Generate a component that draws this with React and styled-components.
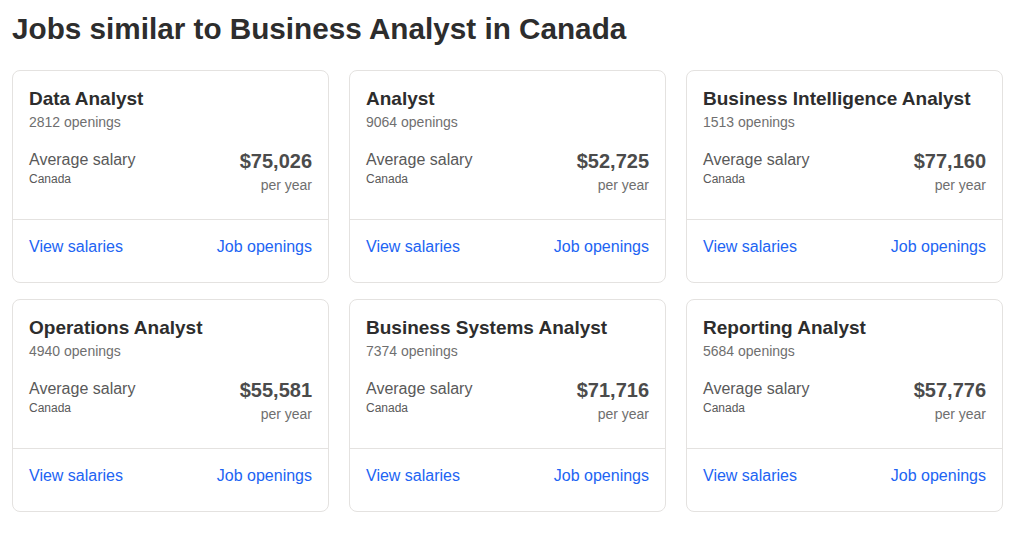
import React from "react"
import styled, { createGlobalStyle } from "styled-components"

const GlobalStyle = createGlobalStyle`
  body {
    margin: 0;
    background: #fff;
    font-family: "Liberation Sans", Arial, Helvetica, sans-serif;
  }
`

const StyledPage = styled.div`
  padding: 12px 20px 24px 12px;
`

const StyledHeading = styled.h1`
  margin: 0 0 24px;
  font-size: 29.7px;
  line-height: 34px;
  font-weight: 700;
  color: #2d2d2d;
`

const StyledGrid = styled.div`
  display: grid;
  grid-template-columns: repeat(3, 317px);
  column-gap: 20px;
  row-gap: 16px;
`

const StyledCard = styled.div`
  border: 1px solid #e4e2e0;
  border-radius: 8px;
  background: #fff;
  display: flex;
  flex-direction: column;
`

const StyledBody = styled.div`
  padding: 16px 16px 24px;
`

const StyledTitle = styled.div`
  font-size: 19px;
  line-height: 24px;
  font-weight: 700;
  color: #2d2d2d;
`

const StyledOpenings = styled.div`
  font-size: 14px;
  line-height: 20px;
  margin-top: 1px;
  color: #6f6f6f;
`

const StyledSalaryRow = styled.div`
  display: flex;
  justify-content: space-between;
  margin-top: 16px;
`

const StyledLabel = styled.div`
  font-size: 16px;
  line-height: 23px;
  color: #595959;
`

const StyledLocation = styled.div`
  font-size: 12px;
  line-height: 16px;
  color: #595959;
`

const StyledAmount = styled.div`
  text-align: right;
  font-size: 20px;
  line-height: 26px;
  font-weight: 700;
  color: #4b4b4b;
`

const StyledPeriod = styled.div`
  text-align: right;
  font-size: 14px;
  line-height: 20px;
  margin-top: 1px;
  color: #6f6f6f;
`

const StyledFooter = styled.div`
  border-top: 1px solid #e4e2e0;
  padding: 15px 16px 23px;
  display: flex;
  justify-content: space-between;
`

const StyledLink = styled.a`
  font-size: 16px;
  line-height: 24px;
  color: #2164f3;
  text-decoration: none;
  cursor: pointer;
  &:hover {
    text-decoration: underline;
  }
`

const jobs = [
  { title: "Data Analyst", openings: 2812, salary: "$75,026" },
  { title: "Analyst", openings: 9064, salary: "$52,725" },
  { title: "Business Intelligence Analyst", openings: 1513, salary: "$77,160" },
  { title: "Operations Analyst", openings: 4940, salary: "$55,581" },
  { title: "Business Systems Analyst", openings: 7374, salary: "$71,716" },
  { title: "Reporting Analyst", openings: 5684, salary: "$57,776" },
]

function JobCard({ title, openings, salary }) {
  return (
    <StyledCard>
      <StyledBody>
        <StyledTitle>{title}</StyledTitle>
        <StyledOpenings>{openings} openings</StyledOpenings>
        <StyledSalaryRow>
          <div>
            <StyledLabel>Average salary</StyledLabel>
            <StyledLocation>Canada</StyledLocation>
          </div>
          <div>
            <StyledAmount>{salary}</StyledAmount>
            <StyledPeriod>per year</StyledPeriod>
          </div>
        </StyledSalaryRow>
      </StyledBody>
      <StyledFooter>
        <StyledLink>View salaries</StyledLink>
        <StyledLink>Job openings</StyledLink>
      </StyledFooter>
    </StyledCard>
  )
}

export default function App() {
  return (
    <>
      <GlobalStyle />
      <StyledPage>
        <StyledHeading>Jobs similar to Business Analyst in Canada</StyledHeading>
        <StyledGrid>
          {jobs.map(job => (
            <JobCard key={job.title} {...job} />
          ))}
        </StyledGrid>
      </StyledPage>
    </>
  )
}
